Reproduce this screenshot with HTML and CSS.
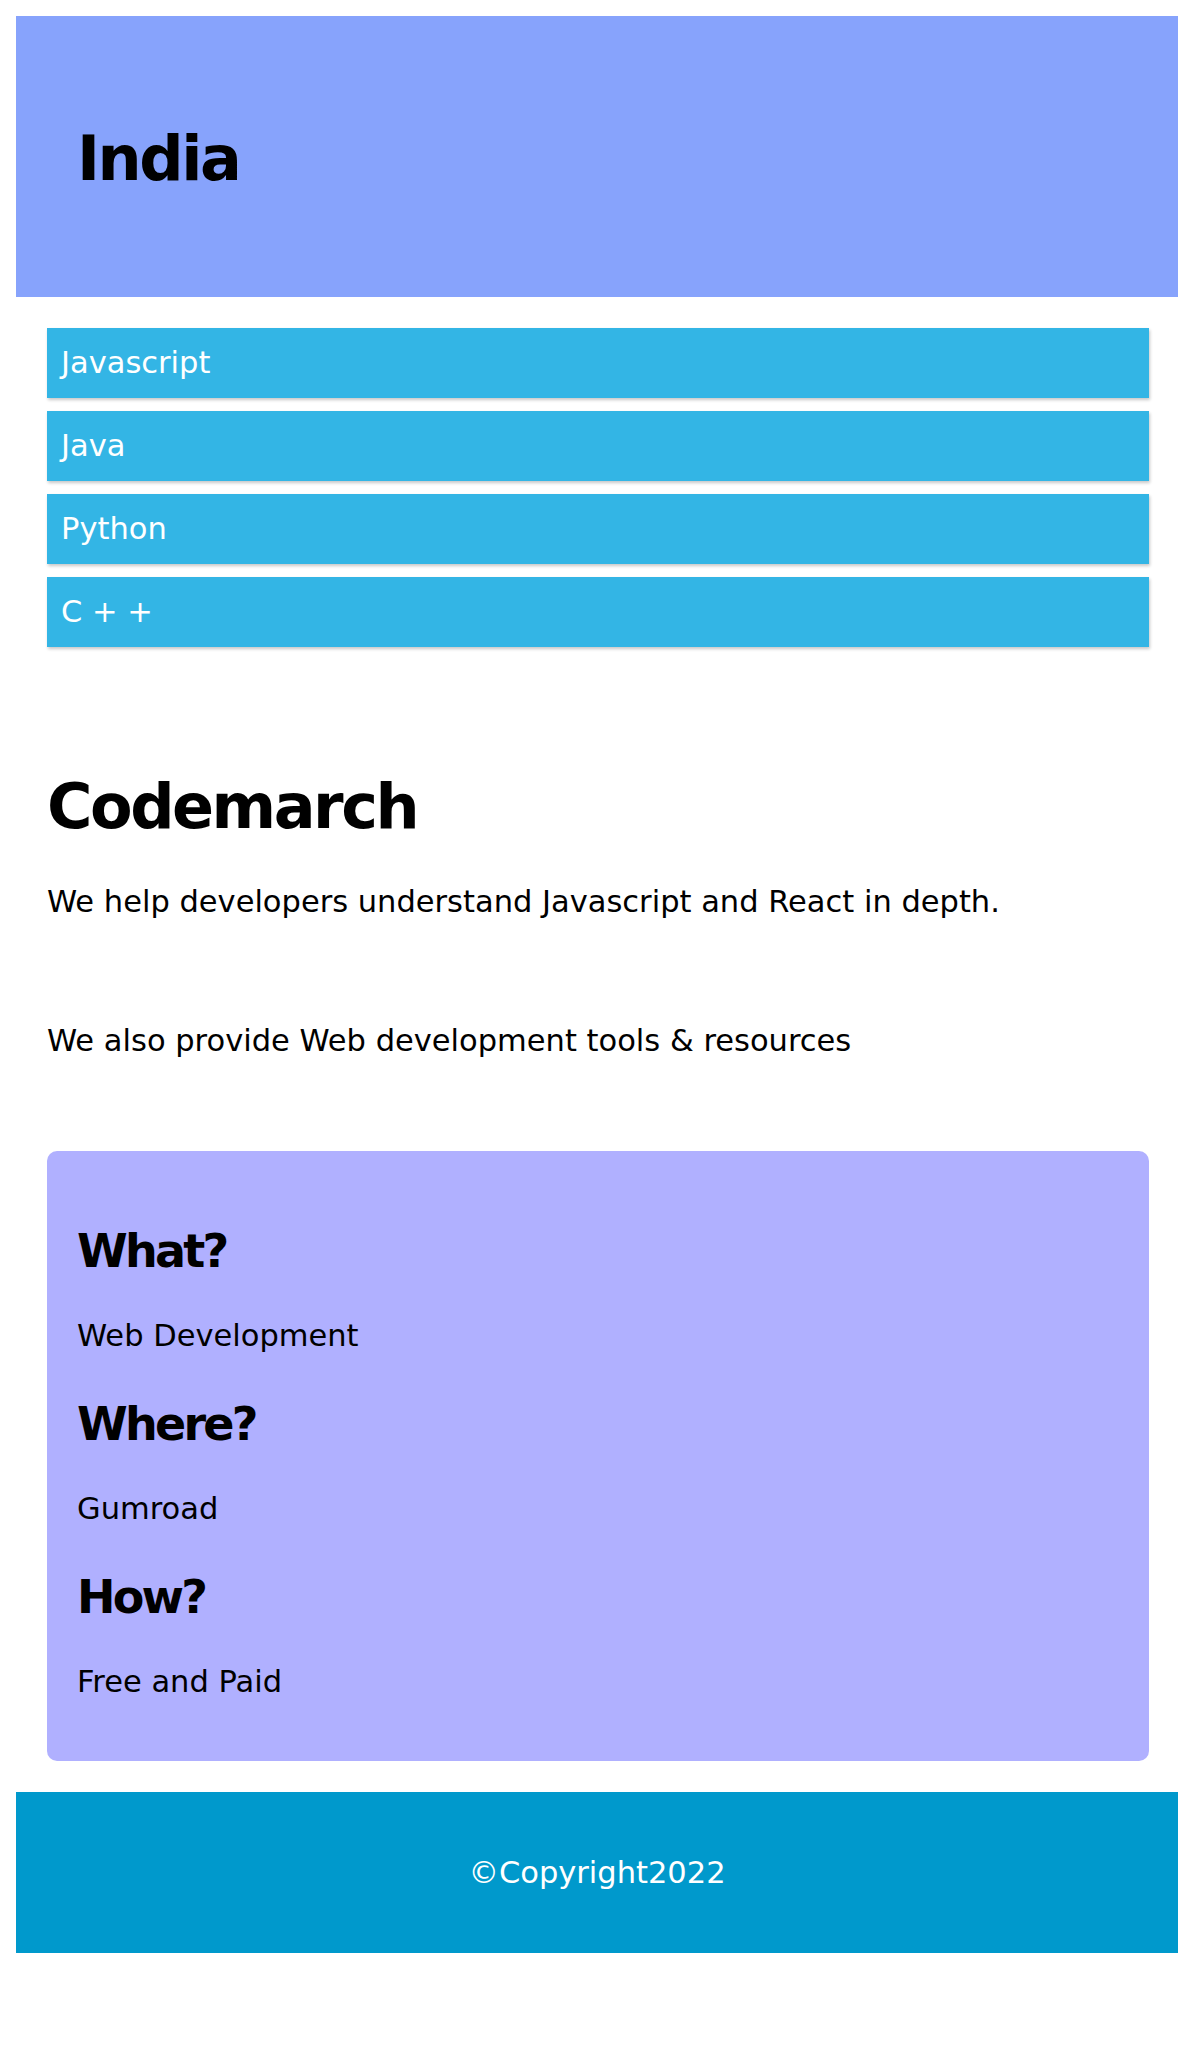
FILE: index.html
```html
<!DOCTYPE html>
<html lang="en">
<head>
<meta charset="utf-8">
<title>India — Codemarch</title>
<link rel="stylesheet" href="styles.css">
</head>
<body>
  <header class="site-header">
    <h1 class="site-title">India</h1>
  </header>

  <div class="content">
    <ul class="langs">
      <li class="lang">Javascript</li>
      <li class="lang">Java</li>
      <li class="lang">Python</li>
      <li class="lang">C + +</li>
    </ul>

    <section class="intro">
      <h1 class="intro-title">Codemarch</h1>
      <p class="intro-text">We help developers understand Javascript and React in depth.</p>
      <p class="intro-text intro-text--spaced">We also provide Web development tools &amp; resources</p>
    </section>

    <section class="card">
      <h2 class="card-title">What?</h2>
      <p class="card-text">Web Development</p>
      <h2 class="card-title">Where?</h2>
      <p class="card-text">Gumroad</p>
      <h2 class="card-title">How?</h2>
      <p class="card-text">Free and Paid</p>
    </section>
  </div>

  <footer class="site-footer">©Copyright2022</footer>
</body>
</html>
```

FILE: styles.css
```css
* {
  box-sizing: border-box;
}

body {
  margin: 16px;
  font-family: "DejaVu Sans", Verdana, sans-serif;
  font-size: 30.5px;
  line-height: 35.5px;
  color: #000;
  background: #fff;
}

.site-header {
  background: #87a3fc;
  padding: 107px 61px 103px;
}

.site-title,
.intro-title {
  margin: 0;
  font-size: 62px;
  line-height: 71px;
  font-weight: bold;
  letter-spacing: -0.04em;
}

.content {
  margin: 0 29px 0 31px;
}

.langs {
  list-style: none;
  margin: 31px 0 0;
  padding: 0;
  display: flex;
  flex-direction: column;
  gap: 13.5px;
}

.lang {
  background: #33b5e5;
  color: #fff;
  padding: 17px 14px;
  line-height: 35.5px;
  box-shadow: 1px 2px 3px rgba(0, 0, 0, 0.22);
}

.intro-title {
  margin: 124px 0 42px;
}

.intro-text {
  margin: 0;
}

.intro-text--spaced {
  margin-top: 103.5px;
}

.card {
  margin-top: 93px;
  background: #b0b0ff;
  border-radius: 10px;
  padding: 30px 30px 32px;
}

.card-title {
  margin: 44px 0 40px;
  font-size: 46px;
  line-height: 53.25px;
  font-weight: bold;
  letter-spacing: -0.06em;
}

.card-text {
  margin: 0 0 30px;
}

.site-footer {
  margin-top: 31px;
  background: #0099cc;
  color: #fff;
  text-align: center;
  padding: 62.5px 0 63px;
  line-height: 35.5px;
}
```
